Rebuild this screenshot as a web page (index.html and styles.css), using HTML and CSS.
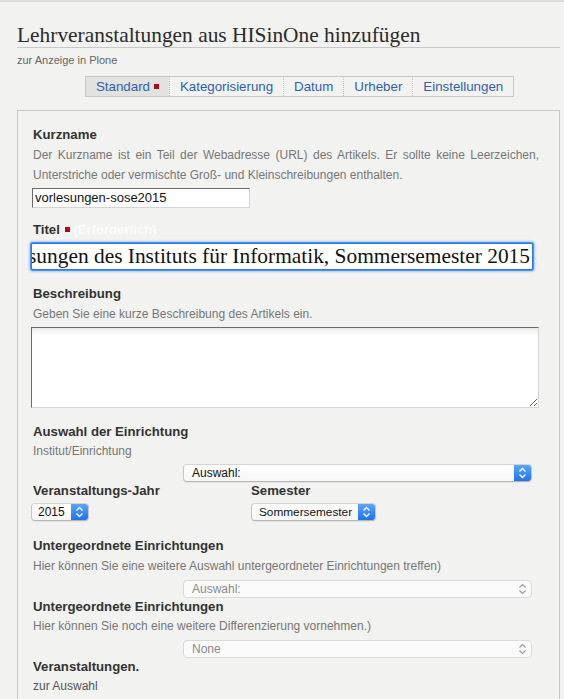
FILE: index.html
```html
<!DOCTYPE html>
<html lang="de">
<head>
<meta charset="utf-8">
<title>Lehrveranstaltungen aus HISinOne hinzufügen</title>
<link rel="stylesheet" href="styles.css">
</head>
<body>
<div class="topbar"></div>
<main class="page">
  <h1 class="title">Lehrveranstaltungen aus HISinOne hinzufügen</h1>
  <p class="subtitle">zur Anzeige in Plone</p>
  <nav class="tabs">
    <a class="tab active">Standard <span class="req"></span></a>
    <a class="tab">Kategorisierung</a>
    <a class="tab">Datum</a>
    <a class="tab">Urheber</a>
    <a class="tab">Einstellungen</a>
  </nav>
  <div class="form">
    <div class="label">Kurzname</div>
    <div class="help">Der Kurzname ist ein Teil der Webadresse (URL) des Artikels. Er sollte keine Leerzeichen, Unterstriche oder vermischte Groß- und Kleinschreibungen enthalten.</div>
    <div class="textinput">vorlesungen-sose2015</div>

    <div class="label gap">Titel <span class="req"></span> <span class="required">(Erforderlich)</span></div>
    <div class="bigInput"><span>Vorlesungen des Instituts für Informatik, Sommersemester 2015</span></div>

    <div class="label gap2">Beschreibung</div>
    <div class="help">Geben Sie eine kurze Beschreibung des Artikels ein.</div>
    <textarea class="area"></textarea>

    <div class="label gap2">Auswahl der Einrichtung</div>
    <div class="help small">Institut/Einrichtung</div>
    <div class="select wide">
      <span class="sel-text">Auswahl:</span>
      <span class="arrow"><svg width="9" height="12" viewBox="0 0 9 12"><path d="M1.5 4.5 L4.5 1.5 L7.5 4.5 M1.5 7.5 L4.5 10.5 L7.5 7.5" fill="none" stroke="#fff" stroke-width="1.4"/></svg></span>
    </div>
    <div class="row">
      <div class="col">
        <div class="label tight">Veranstaltungs-Jahr</div>
        <div class="select year">
          <span class="sel-text">2015</span>
          <span class="arrow"><svg width="9" height="12" viewBox="0 0 9 12"><path d="M1.5 4.5 L4.5 1.5 L7.5 4.5 M1.5 7.5 L4.5 10.5 L7.5 7.5" fill="none" stroke="#fff" stroke-width="1.4"/></svg></span>
        </div>
      </div>
      <div class="col">
        <div class="label tight">Semester</div>
        <div class="select sem">
          <span class="sel-text">Sommersemester</span>
          <span class="arrow"><svg width="9" height="12" viewBox="0 0 9 12"><path d="M1.5 4.5 L4.5 1.5 L7.5 4.5 M1.5 7.5 L4.5 10.5 L7.5 7.5" fill="none" stroke="#fff" stroke-width="1.4"/></svg></span>
        </div>
      </div>
    </div>

    <div class="label gap3">Untergeordnete Einrichtungen</div>
    <div class="help">Hier können Sie eine weitere Auswahl untergeordneter Einrichtungen treffen)</div>
    <div class="select wide disabled">
      <span class="sel-text">Auswahl:</span>
      <span class="arrow"><svg width="9" height="12" viewBox="0 0 9 12"><path d="M1.5 4.5 L4.5 1.5 L7.5 4.5 M1.5 7.5 L4.5 10.5 L7.5 7.5" fill="none" stroke="#9a9a9a" stroke-width="1.2"/></svg></span>
    </div>

    <div class="label tight">Untergeordnete Einrichtungen</div>
    <div class="help">Hier können Sie noch eine weitere Differenzierung vornehmen.)</div>
    <div class="select wide disabled">
      <span class="sel-text">None</span>
      <span class="arrow"><svg width="9" height="12" viewBox="0 0 9 12"><path d="M1.5 4.5 L4.5 1.5 L7.5 4.5 M1.5 7.5 L4.5 10.5 L7.5 7.5" fill="none" stroke="#9a9a9a" stroke-width="1.2"/></svg></span>
    </div>

    <div class="label tight">Veranstaltungen.</div>
    <div class="help dark">zur Auswahl</div>
  </div>
</main>
</body>
</html>
```

FILE: styles.css
```css
html, body {
  margin: 0;
  padding: 0;
  background: #f2f2f0;
  overflow: hidden;
}
body {
  font-family: "Liberation Sans", Arial, sans-serif;
  color: #333;
  height: 699px;
}
.topbar {
  height: 2px;
  background: #dcdcdc;
}
.page {
  padding: 0 4px 0 17px;
}
.title {
  font-family: "Liberation Serif", "Times New Roman", serif;
  font-weight: normal;
  font-size: 21.4px;
  line-height: 26px;
  color: #2b2b2b;
  margin: 0;
  padding-top: 20px;
  padding-bottom: 0;
  border-bottom: 1px solid #c8c8c8;
  height: 25px;
}
.subtitle {
  margin: 0;
  padding-top: 5px;
  font-size: 11px;
  line-height: 14px;
  color: #666;
}
.tabs {
  display: flex;
  width: max-content;
  margin: 9px 0 0 68px;
  border: 1px solid #c8c8c8;
  height: 19px;
}
.tab {
  font-size: 13.3px;
  line-height: 19px;
  color: #2f5fb3;
  padding: 0 10px 0 10px;
  border-left: 1px dotted #c8c8c8;
  display: flex;
  align-items: center;
}
.tab:first-child {
  border-left: none;
}
.tab.active {
  background: #e2e2df;
  padding-right: 10px;
}
.req {
  display: inline-block;
  width: 5px;
  height: 5px;
  background: #b8001f;
  margin-left: 4px;
  vertical-align: middle;
}
.form {
  margin-top: 13px;
  border: 1px solid #c8c8c8;
  border-bottom: none;
  padding: 14px 20px 20px 15px;
  height: 600px;
}
.label {
  font-weight: bold;
  font-size: 13.2px;
  line-height: 20px;
  color: #333;
}
.label.gap { margin-top: 12px; }
.label.gap2 { margin-top: 14px; }
.label.gap3 { margin-top: 15px; }
.label.tight { line-height: 18px; }
.required {
  font-weight: bold;
  color: #fbfbfb;
}
.label .req { margin-left: 1px; vertical-align: 2px; }
.help {
  font-size: 12px;
  line-height: 20px;
  color: #777;
  text-align: justify;
}
.help.small { line-height: 18px; }
.help.dark { color: #555; }
.textinput {
  margin-top: 3px;
  margin-left: -1px;
  width: 214px;
  height: 18px;
  background: #fff;
  border: 1px solid;
  border-color: #6a6a6a #d4d4d4 #d4d4d4 #6a6a6a;
  font-size: 13px;
  line-height: 18px;
  padding-left: 2px;
  color: #111;
}
.bigInput {
  margin-top: 3px;
  margin-left: -2px;
  width: 498px;
  height: 25px;
  background: #fff;
  border: 1px solid #2d78e6;
  border-radius: 2px;
  box-shadow: 0 0 0 1px #4d90ee, 0 0 2px 2px #a9cbf6;
  overflow: hidden;
  display: flex;
  justify-content: flex-end;
  align-items: center;
  white-space: nowrap;
  font-family: "Liberation Serif", "Times New Roman", serif;
  font-size: 21.4px;
  color: #111;
  padding-right: 2px;
}
.area {
  display: block;
  margin: 3px 0 0 -2px;
  width: 506px;
  height: 79px;
  background: #fff;
  border: 1px solid;
  border-color: #6a6a6a #d6d6d6 #d6d6d6 #6a6a6a;
  box-shadow: inset 0 6px 6px -4px rgba(0,0,0,0.12);
  padding: 0;
  resize: both;
  font-family: inherit;
}
.select {
  display: flex;
  align-items: center;
  height: 16px;
  background: linear-gradient(#ffffff, #f6f6f6);
  border: 1px solid #c6c6c6;
  border-top-color: #d4d4d4;
  border-bottom-color: #b4b4b4;
  border-radius: 4px;
  font-size: 12px;
  color: #111;
  box-shadow: 0 1px 1px rgba(0,0,0,0.05);
  overflow: hidden;
}
.select.wide {
  margin-left: 150px;
  width: 347px;
  margin-top: 4px;
}
.select .sel-text {
  flex: 1;
  padding-left: 8px;
  line-height: 16px;
  white-space: nowrap;
}
.select .arrow {
  width: 17px;
  height: 16px;
  flex: none;
  background: linear-gradient(#5aa6fb, #1d73f1);
  display: flex;
  align-items: center;
  justify-content: center;
}
.select.disabled {
  background: #fafafa;
  border-color: #dadada;
  color: #8a8a8a;
  box-shadow: none;
}
.select.disabled .arrow {
  background: none;
}
.row {
  display: flex;
}
.col:first-child {
  width: 218px;
}
.select.year {
  margin-left: -2px;
  width: 56px;
  margin-top: 3px;
}
.select.year .sel-text { padding-left: 6px; }
.select.sem {
  width: 123px;
  margin-top: 3px;
}
.select.sem .sel-text { padding-left: 7px; font-size: 11.8px; }
```
